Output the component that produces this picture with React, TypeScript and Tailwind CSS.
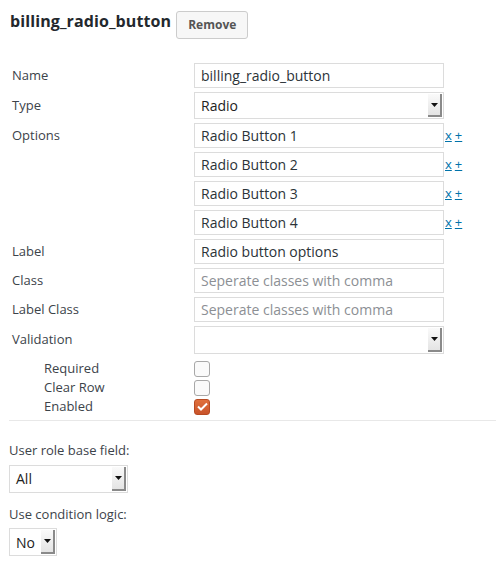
import React from 'react';

const font = { fontFamily: '"Open Sans", "Noto Sans", sans-serif' };

function Arrow() {
  return (
    <div className="w-[14px] self-stretch my-px mr-px bg-gradient-to-b from-[#fafafa] to-[#e4e4e4] border-r-2 border-b-2 border-[#8a8a8a] flex items-center justify-center">
      <svg width="7" height="4" viewBox="0 0 7 4">
        <path d="M0 0h7L3.5 4z" fill="#111" />
      </svg>
    </div>
  );
}

function Select({ value, className }: { value: string; className: string }) {
  return (
    <div className={`flex items-center bg-white border border-[#dcdcdc] ${className}`}>
      <span className="flex-1 pl-[6px] text-[14px] text-[#222]">{value}</span>
      <Arrow />
    </div>
  );
}

function Input({ value, placeholder }: { value?: string; placeholder?: string }) {
  return (
    <div className="w-[250px] h-[25px] flex items-center bg-white border border-[#dcdcdc] px-[6px] text-[14px]">
      {value ? (
        <span className="text-[#2c3338]">{value}</span>
      ) : (
        <span className="text-[#8c8f94]">{placeholder}</span>
      )}
    </div>
  );
}

function Row({ label, children, className = '' }: { label: string; children: React.ReactNode; className?: string }) {
  return (
    <div className={`flex items-center ${className}`}>
      <div className="w-[185px] pl-[3px] text-[13px] text-[#3c434a]">{label}</div>
      {children}
    </div>
  );
}

function OptionRow({ label, value }: { label: string; value: string }) {
  return (
    <Row label={label} className="mt-[4px]">
      <Input value={value} />
      <div className="flex gap-[3px] ml-[1px] text-[13px] leading-none text-[#0073aa]">
        <span className="underline">x</span>
        <span className="underline">+</span>
      </div>
    </Row>
  );
}

function Check({ label, checked }: { label: string; checked?: boolean }) {
  return (
    <div className="flex items-center h-[19px]">
      <div className="w-[185px] pl-[35px] text-[13px] text-[#3c434a]">{label}</div>
      {checked ? (
        <div className="w-[16px] h-[16px] rounded-[3px] bg-gradient-to-b from-[#e0703c] to-[#c9532a] border border-[#b84a22] flex items-center justify-center">
          <svg width="11" height="9" viewBox="0 0 11 9">
            <path d="M1 4.5l3 3L10 1.5" stroke="#fff" strokeWidth="2" fill="none" />
          </svg>
        </div>
      ) : (
        <div className="w-[16px] h-[16px] rounded-[3px] bg-[#fafafa] border border-[#a8a8a8]" />
      )}
    </div>
  );
}

export default function App() {
  return (
    <div className="w-[496px] h-[576px] bg-white px-[9px]" style={font}>
      <div className="flex items-start pt-[11px]">
        <h1 className="text-[16px] font-bold text-[#23282d] leading-[20px] pl-px tracking-[0.1px]">billing_radio_button</h1>
        <button className="ml-[5px] h-[28px] px-[11px] bg-[#f7f7f7] border border-[#cccccc] rounded-[3px] text-[12px] font-bold text-[#555]">
          Remove
        </button>
      </div>

      <div className="mt-[24px]">
        <Row label="Name">
          <Input value="billing_radio_button" />
        </Row>
        <Row label="Type" className="mt-[4px]">
          <Select value="Radio" className="w-[250px] h-[27px]" />
        </Row>
        <OptionRow label="Options" value="Radio Button 1" />
        <OptionRow label="" value="Radio Button 2" />
        <OptionRow label="" value="Radio Button 3" />
        <OptionRow label="" value="Radio Button 4" />
        <Row label="Label" className="mt-[4px]">
          <Input value="Radio button options" />
        </Row>
        <Row label="Class" className="mt-[4px]">
          <Input placeholder="Seperate classes with comma" />
        </Row>
        <Row label="Label Class" className="mt-[4px]">
          <Input placeholder="Seperate classes with comma" />
        </Row>
        <Row label="Validation" className="mt-[4px]">
          <Select value="" className="w-[250px] h-[28px]" />
        </Row>
      </div>

      <div className="mt-[5px] flex flex-col">
        <Check label="Required" />
        <Check label="Clear Row" />
        <Check label="Enabled" checked />
      </div>

      <div className="mt-[4px] border-t border-[#e8e8e8] -mr-[9px]" />

      <div className="mt-[20px] text-[13px] text-[#3c434a]">User role base field:</div>
      <Select value="All" className="mt-[4px] w-[119px] h-[28px]" />
      <div className="mt-[12px] text-[13px] text-[#3c434a]">Use condition logic:</div>
      <Select value="No" className="mt-[4px] w-[48px] h-[28px]" />
    </div>
  );
}
